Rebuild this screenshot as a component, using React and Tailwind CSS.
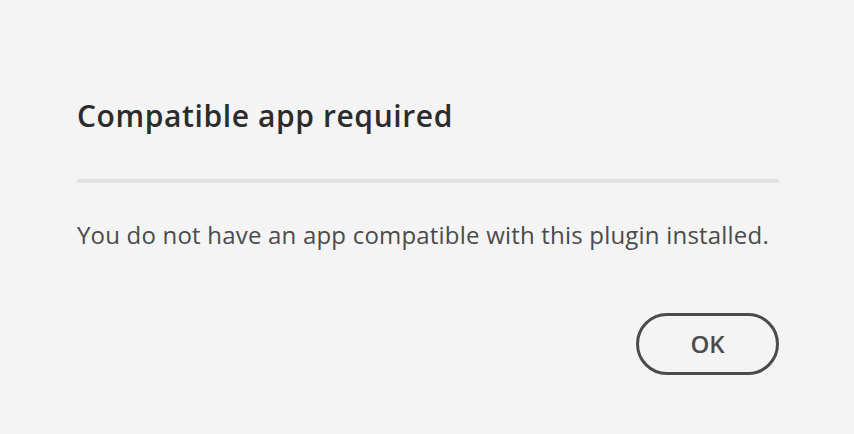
export default function App() {
  return (
    <div className="w-[854px] h-[434px] bg-[#f4f4f4] overflow-hidden font-['Open_Sans',sans-serif]">
      <div className="pl-[77px] pr-[75px] pt-[96px]">
        <h1 className="text-[30px] leading-[40px] tracking-[0.6px] font-semibold text-[#2c2c2c]">
          Compatible app required
        </h1>
        <div className="mt-[43px] h-[4px] bg-[#e1e1e1]" />
        <p className="mt-[36px] text-[24px] leading-[32px] tracking-[0.2px] text-[#4b4b4b]">
          You do not have an app compatible with this plugin installed.
        </p>
        <div className="mt-[62px] flex justify-end">
          <button className="w-[143px] h-[62px] rounded-full border-[3px] border-[#4b4b4b] text-[24px] font-semibold text-[#4b4b4b]">
            OK
          </button>
        </div>
      </div>
    </div>
  );
}
